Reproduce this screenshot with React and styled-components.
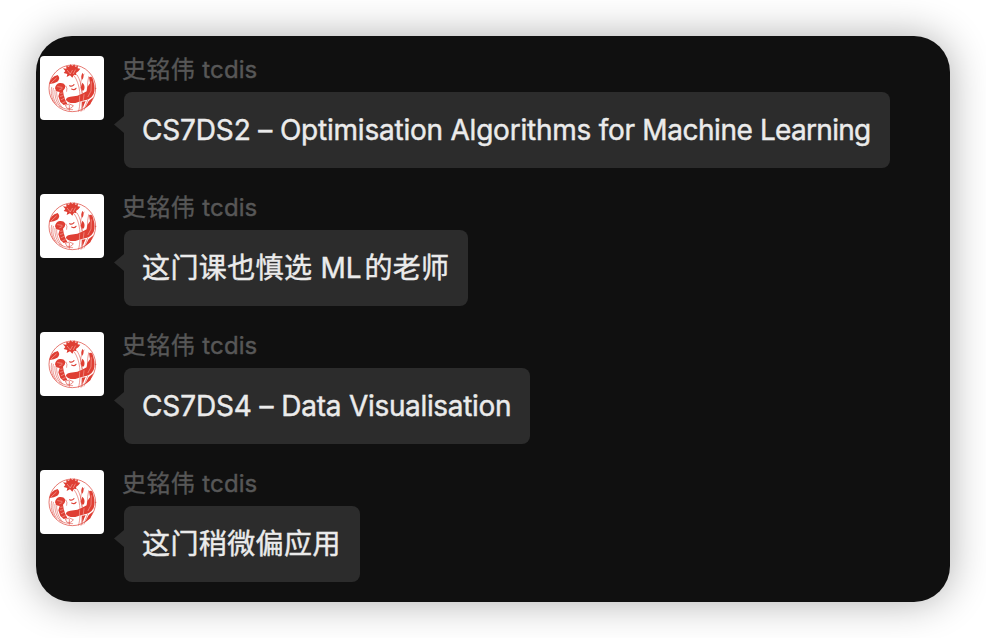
import React from "react";
import styled, { createGlobalStyle } from "styled-components";

const GlobalStyle = createGlobalStyle`
  * { box-sizing: border-box; }
  body {
    margin: 0;
    background: #fff;
    font-family: Inter, "Noto Sans CJK SC", sans-serif;
  }
`;

const Page = styled.main`
  width: 986px;
  height: 638px;
  padding: 36px;
  overflow: hidden;
`;

const ChatWindow = styled.section`
  width: 914px;
  height: 566px;
  padding: 20px 4px;
  border-radius: 36px;
  background: #101010;
  box-shadow: 0 0 40px rgba(0, 0, 0, 0.32);
  display: flex;
  flex-direction: column;
  gap: 26px;
`;

const MessageRow = styled.article`
  display: flex;
  align-items: flex-start;
  gap: 20px;
  height: 112px;
`;

const Avatar = styled.svg`
  display: block;
  flex: none;
  width: 64px;
  height: 64px;
  border-radius: 4px;
  background: #fff;
`;

const MessageBody = styled.div`
  display: flex;
  flex-direction: column;
  align-items: flex-start;
`;

const Sender = styled.div`
  height: 36px;
  margin-left: -2px;
  color: #575757;
  font-size: 24px;
  line-height: 27px;
  -webkit-text-stroke: 0.4px currentColor;
  white-space: pre;
`;

const Bubble = styled.div`
  position: relative;
  width: ${(p) => p.$width}px;
  height: 76px;
  padding: 0 18px;
  border-radius: 8px;
  background: #2c2c2c;
  color: #ebebeb;
  font-size: 28px;
  line-height: 76px;
  -webkit-text-stroke: 0.45px currentColor;
  white-space: pre;

  &::before {
    content: "";
    position: absolute;
    left: -10px;
    top: 24px;
    width: 10px;
    height: 17px;
    background: #2c2c2c;
    clip-path: polygon(0 50%, 100% 0, 100% 100%);
  }
`;

const Run = styled.span`
  letter-spacing: ${(p) => p.$tracking || 0}px;
`;

const messages = [
  {
    width: 766,
    runs: [
      ["CS7DS2 – ", -0.15],
      ["Optimisation ", -0.22],
      ["Algorithms ", -0.23],
      ["for ", -0.3],
      ["Machine ", -0.44],
      ["Learning", -0.68],
    ],
  },
  { width: 344, runs: [["这门课也慎选", 0.4], [" M", 0.1], ["L", 2.8], ["的老师", 0.32]] },
  { width: 406, runs: [["CS7DS4 – ", -0.12], ["Data ", -0.2], ["Visualisation", -0.34]] },
  { width: 236, runs: [["这门稍微偏应用", 0.4]] },
];

function LotusAvatar() {
  return (
    <Avatar viewBox="0 0 192 192" aria-label="史铭伟">
      <g fill="none" stroke="#dd4238" strokeLinecap="round" strokeLinejoin="round">
        <circle cx="97" cy="97" r="70" strokeWidth="3" opacity=".7" />
        <path d="M103 60 C120 84 125 125 116 166 M112 58 C128 84 130 125 123 166 M132 54 C118 72 121 98 127 111 M146 62 C139 88 146 106 138 128 M35 94 C31 110 36 130 44 141 M40 97 C36 112 40 132 51 146 M45 103 C43 121 50 141 61 153 M50 108 C49 124 56 143 68 156 M58 150 Q74 162 98 161 M132 138 L126 164 M143 132 L132 162 M78 90 Q83 96 80 106" strokeWidth="2.4" opacity=".65" />
        <path d="M89 89 Q96 93 102 86 M95 99 Q103 104 108 97" strokeWidth="3.4" />
        <path d="M77 147 Q89 140 100 149 Q94 160 82 157 Z M88 148 V163" strokeWidth="2.6" opacity=".7" />
      </g>
      <g fill="#df3f34">
        <path d="M91 25 L97 30 103 25 106 32 114 29 113 37 121 38 115 46 108 51 110 58 102 56 97 65 90 58 80 63 82 54 71 51 76 45 69 37 79 38 79 29 87 32 Z" />
        <path d="M28 84 Q31 63 53 57 Q63 67 52 77 Q43 83 28 84 Z" />
        <path d="M45 97 Q47 83 59 81 Q74 80 76 91 L74 98 69 104 71 116 75 130 82 144 71 147 61 138 55 121 59 108 49 106 Z" />
        <path d="M147 64 Q157 57 160 75 Q167 97 161 114 Q151 133 127 134 L106 141 Q84 143 78 132 Q77 124 91 122 L112 119 126 113 140 106 142 93 150 82 Z" />
        <path d="M127 80 Q137 88 132 102 Q126 108 122 95 Z M128 50 Q134 61 127 71 Q120 62 128 50 Z" />
        <path d="M146 135 L160 124 151 145 134 158 Z M126 138 L137 135 127 157 Z" />
      </g>
      <g fill="none" stroke="#ffddd7" strokeWidth="1.7" strokeLinecap="round">
        <path d="M82 43 L91 54 97 43 M106 42 L100 53 M34 80 L49 66 M53 92 L66 94 M59 101 L66 98 M62 112 L67 111 M61 121 L69 119 M64 131 L72 127 M68 140 L76 137 M154 77 L153 105 144 122 M119 120 L118 137 M132 116 L130 131" opacity=".75" />
      </g>
    </Avatar>
  );
}

export default function App() {
  return (
    <>
      <GlobalStyle />
      <Page>
        <ChatWindow>
          {messages.map((message) => (
            <MessageRow key={message.width}>
              <LotusAvatar />
              <MessageBody>
                <Sender>
                  <Run $tracking={0.4}>史铭伟 </Run>
                  <Run $tracking={0.1}>tcdis</Run>
                </Sender>
                <Bubble $width={message.width}>
                  {message.runs.map(([text, tracking]) => (
                    <Run key={text} $tracking={tracking}>{text}</Run>
                  ))}
                </Bubble>
              </MessageBody>
            </MessageRow>
          ))}
        </ChatWindow>
      </Page>
    </>
  );
}
